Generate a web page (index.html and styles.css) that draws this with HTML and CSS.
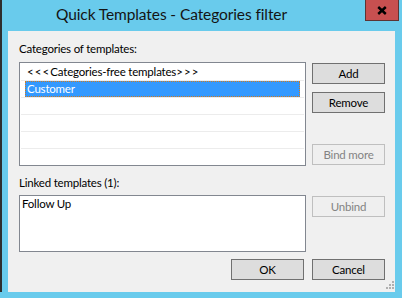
FILE: index.html
```html
<!DOCTYPE html>
<html>
<head>
<meta charset="utf-8">
<link rel="stylesheet" href="styles.css">
</head>
<body>
<div class="window">
  <div class="titlebar">
    <span class="title">Quick Templates - Categories filter</span>
    <div class="close">
      <svg width="10" height="9" viewBox="0 0 10 9"><path d="M1.2 1 L8.8 8 M8.8 1 L1.2 8" stroke="#000" stroke-width="2.4" fill="none"/></svg>
    </div>
  </div>
  <div class="client">
    <div class="label label-cat">Categories of templates:</div>
    <div class="row row-cat">
      <div class="list list-cat">
        <div class="item"><span class="item-text"><span class="brackets">&lt;&lt;&lt;</span>Categories-free templates<span class="brackets">&gt;&gt;&gt;</span></span></div>
        <div class="item selected"><span class="item-text">Customer</span></div>
        <div class="item"><span class="item-text"></span></div>
        <div class="item"><span class="item-text"></span></div>
        <div class="item"><span class="item-text"></span></div>
        <div class="item"><span class="item-text"></span></div>
      </div>
      <div class="btn-col">
        <div class="btn">Add</div>
        <div class="btn btn-remove">Remove</div>
        <div class="btn btn-bind disabled">Bind more</div>
      </div>
    </div>
    <div class="label label-linked">Linked templates (1):</div>
    <div class="row row-linked">
      <div class="list list-linked"><div class="linked-text">Follow Up</div></div>
      <div class="btn-col">
        <div class="btn disabled">Unbind</div>
      </div>
    </div>
    <div class="footer">
      <div class="btn">OK</div>
      <div class="btn">Cancel</div>
    </div>
    <svg class="grip" width="9" height="9" viewBox="0 0 9 9">
      <rect x="7" y="0" width="2" height="2" fill="#b0b0b0"/>
      <rect x="4" y="3" width="2" height="2" fill="#b0b0b0"/>
      <rect x="7" y="3" width="2" height="2" fill="#b0b0b0"/>
      <rect x="1" y="6" width="2" height="2" fill="#b0b0b0"/>
      <rect x="4" y="6" width="2" height="2" fill="#b0b0b0"/>
      <rect x="7" y="6" width="2" height="2" fill="#b0b0b0"/>
    </svg>
  </div>
</div>
</body>
</html>
```
FILE: styles.css
```css
html, body {
  margin: 0;
  padding: 0;
}
body {
  width: 402px;
  height: 298px;
  overflow: hidden;
  background: #69cbec;
  font-family: Lato, "Noto Sans", sans-serif;
  font-size: 11.5px;
  letter-spacing: -0.2px;
  color: #000;
}
.window {
  height: 292px;
  box-sizing: border-box;
  border-left: 2px solid #2e2e2e;
  display: flex;
  flex-direction: column;
}
.titlebar {
  flex: none;
  height: 31px;
  display: flex;
  align-items: flex-start;
}
.title {
  margin-left: 54px;
  margin-top: 4px;
  font-size: 15.5px;
  letter-spacing: -0.1px;
  line-height: 20px;
  color: #141414;
  white-space: nowrap;
}
.close {
  margin-left: auto;
  margin-right: 3px;
  width: 34px;
  height: 21px;
  box-sizing: border-box;
  background: #c75050;
  border: 1px solid #5c3434;
  border-top: 0;
  display: flex;
  align-items: center;
  justify-content: center;
}
.close svg {
  display: block;
}
.client {
  position: relative;
  flex: 1;
  margin-left: 6px;
  width: 387px;
  box-sizing: border-box;
  background: #f0f0f0;
  padding-left: 11px;
  display: flex;
  flex-direction: column;
}
.label {
  line-height: 15px;
  white-space: nowrap;
}
.label-cat {
  margin-top: 10px;
}
.label-linked {
  margin-top: 9px;
}
.row {
  display: flex;
  gap: 6px;
}
.row-cat {
  margin-top: 6px;
}
.row-linked {
  margin-top: 5px;
}
.list {
  width: 287px;
  box-sizing: border-box;
  border: 1px solid #828790;
  background: #fff;
  overflow: hidden;
}
.list-cat {
  height: 104px;
  padding-top: 1px;
}
.item {
  height: 17px;
  box-sizing: border-box;
  margin: 0 1px;
  padding: 0 4px;
  border-bottom: 1px solid #ececec;
}
.item-text {
  display: block;
  height: 16px;
  line-height: 16px;
  padding-left: 2px;
  white-space: nowrap;
}
.brackets {
  letter-spacing: 1.1px;
}
.selected .item-text {
  background: #3399ff;
  color: #fff;
  outline: 1px dotted #d07a20;
  outline-offset: -1px;
}
.list-linked {
  height: 57px;
}
.linked-text {
  padding-left: 2px;
  line-height: 15px;
}
.btn-col {
  width: 73px;
  padding-top: 1px;
  display: flex;
  flex-direction: column;
}
.btn {
  width: 73px;
  height: 21px;
  box-sizing: border-box;
  border: 1px solid #707070;
  background: #dddddd;
  line-height: 19px;
  text-align: center;
  white-space: nowrap;
}
.btn-remove {
  margin-top: 8px;
}
.btn-bind {
  margin-top: 31px;
}
.btn.disabled {
  border-color: #bfbfbf;
  background: #efefef;
  color: #838383;
}
.footer {
  margin-top: 7px;
  padding-right: 10px;
  display: flex;
  justify-content: flex-end;
  gap: 8px;
}
.grip {
  position: absolute;
  right: 1px;
  bottom: 2px;
}
```
